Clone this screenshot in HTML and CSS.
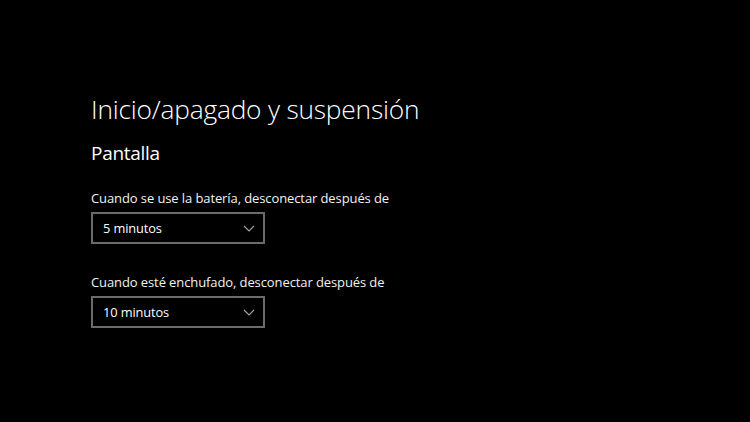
FILE: index.html
```html
<!DOCTYPE html>
<html lang="es">
<head>
<meta charset="utf-8">
<link rel="stylesheet" href="styles.css">
</head>
<body>
<main class="page">
  <h1 class="title">Inicio/apagado y suspensión</h1>
  <h2 class="section">Pantalla</h2>
  <div class="setting">
    <label class="label">Cuando se use la batería, desconectar después de</label>
    <div class="select">
      <span class="value">5 minutos</span>
      <svg class="chev" width="12" height="7" viewBox="0 0 12 7"><path d="M1 1 L6 6 L11 1" fill="none" stroke="#a0a0a0" stroke-width="1.2"/></svg>
    </div>
  </div>
  <div class="setting">
    <label class="label">Cuando esté enchufado, desconectar después de</label>
    <div class="select">
      <span class="value">10 minutos</span>
      <svg class="chev" width="12" height="7" viewBox="0 0 12 7"><path d="M1 1 L6 6 L11 1" fill="none" stroke="#a0a0a0" stroke-width="1.2"/></svg>
    </div>
  </div>
</main>
</body>
</html>
```
FILE: styles.css
```css
html, body {
  margin: 0;
  padding: 0;
  background: #000;
  width: 750px;
  height: 422px;
  overflow: hidden;
}
body {
  font-family: "Open Sans", "Noto Sans", sans-serif;
  color: #fff;
}
.page {
  padding: 90px 0 0 91px;
}
.title {
  margin: 0;
  font-size: 26.3px;
  font-weight: 300;
  line-height: 38px;
  letter-spacing: -0.2px;
}
.section {
  margin: 12px 0 0 0;
  font-size: 19px;
  font-weight: 400;
  line-height: 26px;
  letter-spacing: -0.3px;
}
.setting {
  margin-top: 23px;
}
.setting + .setting {
  margin-top: 29px;
}
.label {
  display: block;
  font-size: 13px;
  line-height: 18px;
  color: #f2f2f2;
  letter-spacing: -0.1px;
}
.select {
  margin-top: 5px;
  height: 28px;
  border: 2px solid #6b6b6b;
  display: flex;
  align-items: center;
  justify-content: space-between;
  padding: 0 8px 0 10px;
  box-sizing: content-box;
  width: 152px;
}
.value {
  font-size: 12.8px;
  color: #fff;
  letter-spacing: -0.1px;
}
.chev {
  display: block;
}
```
